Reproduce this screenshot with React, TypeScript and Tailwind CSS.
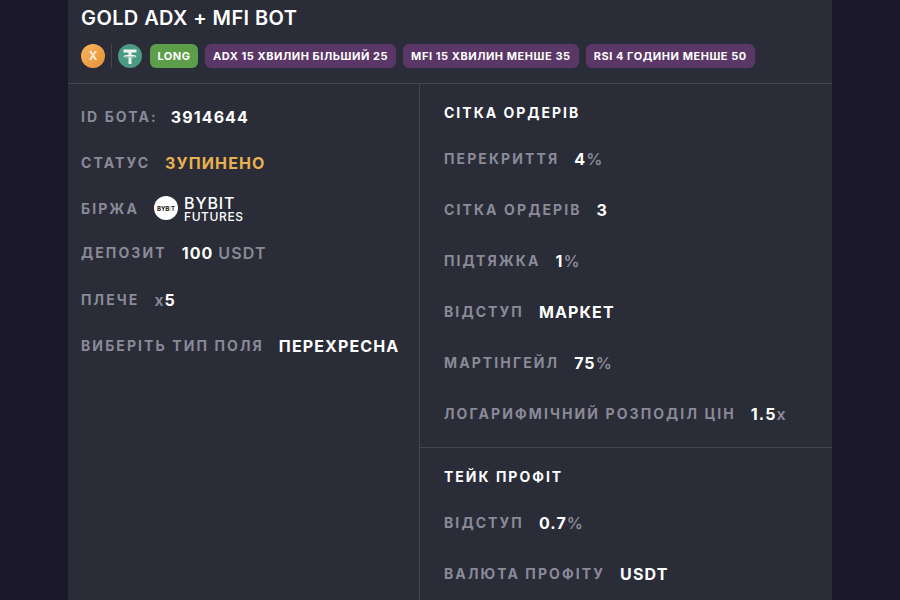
const BASE_FONT = "font-['Inter','Liberation_Sans',sans-serif]";

function Row({ label, children, className, gap = "mr-[15px]" }: { label: string; children: React.ReactNode; className: string; gap?: string }) {
  return (
    <div className={`flex items-center ${className}`}>
      <span className={`${gap} text-[14px] leading-[20px] font-bold tracking-[2.1px] text-[#8a8a98]`}>{label}</span>
      <span className="text-[16px] leading-[20px] font-bold tracking-[1.1px] text-white">{children}</span>
    </div>
  );
}

function Dim({ children }: { children: React.ReactNode }) {
  return <span className="font-semibold text-[#8a8a98]">{children}</span>;
}

function Tag({ children }: { children: React.ReactNode }) {
  return (
    <span className="flex h-6 items-center rounded-md bg-[#5a3766] px-2 text-[11px] font-bold tracking-[0.55px] whitespace-nowrap text-white">
      {children}
    </span>
  );
}

function TetherIcon() {
  return (
    <svg width="24" height="24" viewBox="0 0 24 24">
      <circle cx="12" cy="12" r="12" fill="#4b9b84" />
      <path d="M5.500 5.500h13v3h-5v2.300c2.700.1 5 .7 5 1.400s-2.300 1.300-5 1.400V20h-3v-6.400c-2.700-.1-5-.7-5-1.400s2.300-1.300 5-1.400V8.500h-5z" fill="#eef5f2" />
      <path d="M7 12.300c1.100.500 3 .7 5 .7s3.900-.2 5-.7" stroke="#4b9b84" strokeWidth="0.7" fill="none" />
    </svg>
  );
}

export default function App() {
  return (
    <div className={`h-[600px] w-[900px] overflow-hidden bg-[#1a1829] ${BASE_FONT}`}>
      <div className="mx-[68px] h-[600px] bg-[#2a2c37]">
        <div className="h-[84px] border-b border-[#43454f] px-[13px]">
          <h1 className="pt-[7px] text-[20px] leading-[23px] font-semibold tracking-[0.4px] text-white">GOLD ADX + MFI BOT</h1>
          <div className="mt-[14px] flex items-center">
            <span className="flex h-6 w-6 items-center justify-center rounded-full bg-gradient-to-br from-[#f7b65c] to-[#e88f3a] text-[12px] font-semibold text-[#fdf3e4]">X</span>
            <span className="mx-[6px] h-6 w-px bg-[#43454f]" />
            <TetherIcon />
            <div className="ml-2 flex gap-[7px]">
              <span className="flex h-6 w-12 items-center justify-center rounded-md bg-[#5c9e4a] text-[11px] font-bold tracking-[0.55px] text-white">LONG</span>
              <Tag>ADX 15 ХВИЛИН БІЛЬШИЙ 25</Tag>
              <Tag>MFI 15 ХВИЛИН МЕНШЕ 35</Tag>
              <Tag>RSI 4 ГОДИНИ МЕНШЕ 50</Tag>
            </div>
          </div>
        </div>
        <div className="flex h-[516px]">
          <div className="w-[352px] border-r border-[#43454f] pl-[13px]">
            <Row label="ID БОТА:" className="mt-[23px] h-5" gap="mr-[13px]">3914644</Row>
            <Row label="СТАТУС" className="mt-[26px] h-5"><span className="text-[#e8b04f]">ЗУПИНЕНО</span></Row>
            <div className="mt-[19px] flex h-8 items-center">
              <span className="mr-[15px] text-[14px] font-bold tracking-[2.1px] text-[#8a8a98]">БІРЖА</span>
              <span className="flex h-6 w-6 items-center justify-center rounded-full bg-white text-[6px] font-bold text-[#1a1829]">BYB<span className="text-[#e8b04f]">I</span>T</span>
              <div className="ml-[6px] flex flex-col pt-1 text-white">
                <span className="text-[16px] leading-[14px] font-medium tracking-[0.9px]">BYBIT</span>
                <span className="text-[12px] leading-[14px] font-medium tracking-[0.6px]">FUTURES</span>
              </div>
            </div>
            <Row label="ДЕПОЗИТ" className="mt-[19px] h-5"><>100 <Dim>USDT</Dim></></Row>
            <Row label="ПЛЕЧЕ" className="mt-[27px] h-5"><><Dim>x</Dim>5</></Row>
            <Row label="ВИБЕРІТЬ ТИП ПОЛЯ" className="mt-[26px] h-5">ПЕРЕХРЕСНА</Row>
          </div>
          <div className="flex-1">
            <div className="border-b border-[#43454f] px-6 pb-[23px]">
              <h2 className="mt-[19px] text-[14px] leading-[20px] font-bold tracking-[2px] text-white">СІТКА ОРДЕРІВ</h2>
              <Row label="ПЕРЕКРИТТЯ" className="mt-[26px] h-5"><>4<Dim>%</Dim></></Row>
              <Row label="СІТКА ОРДЕРІВ" className="mt-[31px] h-5">3</Row>
              <Row label="ПІДТЯЖКА" className="mt-[31px] h-5"><>1<Dim>%</Dim></></Row>
              <Row label="ВІДСТУП" className="mt-[31px] h-5">МАРКЕТ</Row>
              <Row label="МАРТІНГЕЙЛ" className="mt-[31px] h-5"><>75<Dim>%</Dim></></Row>
              <Row label="ЛОГАРИФМІЧНИЙ РОЗПОДІЛ ЦІН" className="mt-[31px] h-5"><>1.5<Dim>x</Dim></></Row>
            </div>
            <div className="px-6">
              <h2 className="mt-[19px] text-[14px] leading-[20px] font-bold tracking-[2px] text-white">ТЕЙК ПРОФІТ</h2>
              <Row label="ВІДСТУП" className="mt-[26px] h-5"><>0.7<Dim>%</Dim></></Row>
              <Row label="ВАЛЮТА ПРОФІТУ" className="mt-[31px] h-5">USDT</Row>
            </div>
          </div>
        </div>
      </div>
    </div>
  );
}
